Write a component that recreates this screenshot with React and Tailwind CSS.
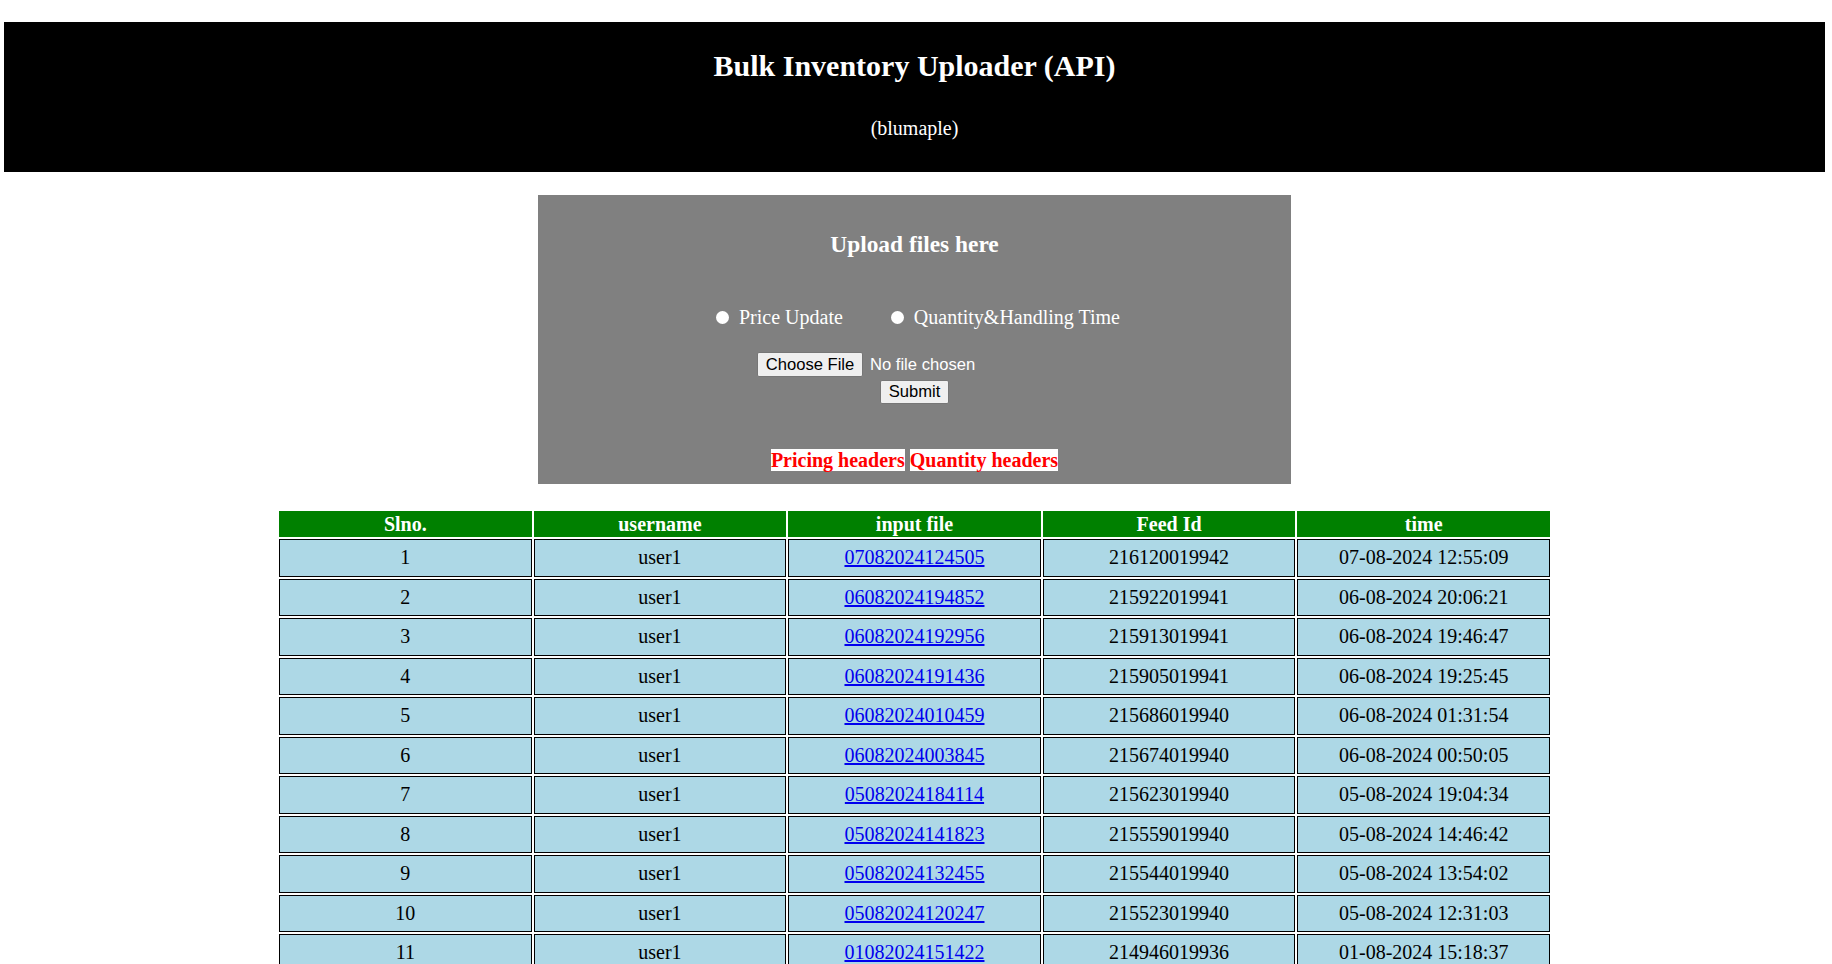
const rows = [
  ['1', 'user1', '07082024124505', '216120019942', '07-08-2024 12:55:09'],
  ['2', 'user1', '06082024194852', '215922019941', '06-08-2024 20:06:21'],
  ['3', 'user1', '06082024192956', '215913019941', '06-08-2024 19:46:47'],
  ['4', 'user1', '06082024191436', '215905019941', '06-08-2024 19:25:45'],
  ['5', 'user1', '06082024010459', '215686019940', '06-08-2024 01:31:54'],
  ['6', 'user1', '06082024003845', '215674019940', '06-08-2024 00:50:05'],
  ['7', 'user1', '05082024184114', '215623019940', '05-08-2024 19:04:34'],
  ['8', 'user1', '05082024141823', '215559019940', '05-08-2024 14:46:42'],
  ['9', 'user1', '05082024132455', '215544019940', '05-08-2024 13:54:02'],
  ['10', 'user1', '05082024120247', '215523019940', '05-08-2024 12:31:03'],
  ['11', 'user1', '01082024151422', '214946019936', '01-08-2024 15:18:37'],
];

const heads = ['Slno.', 'username', 'input file', 'Feed Id', 'time'];

const Radio = ({ name }) => (
  <input
    type="radio"
    name={name}
    className="m-0 h-[13px] w-[13px] shrink-0 appearance-none rounded-full bg-white"
  />
);

export default function App() {
  return (
    <div className="w-[1829px] bg-white pt-[22px] pb-[40px] font-['Liberation_Serif','Times_New_Roman',serif] text-black">
      <header className="mx-[4px] h-[150px] bg-black text-center text-white">
        <h1 className="pt-[27px] text-[30px] font-bold leading-[34px]">
          Bulk Inventory Uploader (API)
        </h1>
        <p className="mt-[34px] text-[20px] leading-[23px]">(blumaple)</p>
      </header>

      <section className="mx-auto mt-[23px] flex h-[289px] w-[753px] flex-col bg-[#808080]">
        <h3 className="mt-[36px] text-center text-[23.4px] font-bold leading-[27px] text-white">
          Upload files here
        </h3>

        <div className="mt-[48px] flex h-[23px] items-center pl-[178px] text-[20px] leading-[23px] text-white">
          <Radio name="kind" />
          <span className="ml-[10px]">Price Update</span>
          <span className="ml-[48px] flex items-center">
            <Radio name="kind" />
          </span>
          <span className="ml-[10px]">Quantity&amp;Handling Time</span>
        </div>

        <div className="mt-[23px] flex items-center pl-[219px] font-['Liberation_Sans',Arial,sans-serif] text-[16.6px]">
          <button className="h-[25px] w-[106px] rounded-[2px] border border-[#767676] bg-[#efefef] p-0 leading-[18px] text-black">
            Choose File
          </button>
          <span className="ml-[7px] leading-[18px] text-white">No file chosen</span>
        </div>

        <button className="mx-auto mt-[3px] h-[24px] w-[69px] rounded-[2px] border border-[#767676] bg-[#efefef] p-0 font-['Liberation_Sans',Arial,sans-serif] text-[16.6px] leading-[18px] text-black">
          Submit
        </button>

        <div className="mt-[45px] flex justify-center gap-[5px] text-[20px] font-bold leading-[22px] text-[#ff0000]">
          <span className="h-[22px] bg-white">Pricing headers</span>
          <span className="h-[22px] bg-white">Quantity headers</span>
        </div>
      </section>

      <table className="mx-auto mt-[25px] w-[1275px] table-fixed border-separate border-spacing-[2px] text-center text-[20px] leading-[23px]">
        <thead>
          <tr>
            {heads.map((h) => (
              <th key={h} className="h-[26px] bg-[#008000] p-0 font-bold text-white">
                {h}
              </th>
            ))}
          </tr>
        </thead>
        <tbody>
          {rows.map((r) => (
            <tr key={r[0]}>
              {r.map((c, i) => (
                <td key={i} className="h-[37.5px] border border-black bg-[#add8e6] p-0 align-middle">
                  {i === 2 ? (
                    <a href="#" className="text-[#0000ee] underline">
                      {c}
                    </a>
                  ) : (
                    c
                  )}
                </td>
              ))}
            </tr>
          ))}
        </tbody>
      </table>
    </div>
  );
}
